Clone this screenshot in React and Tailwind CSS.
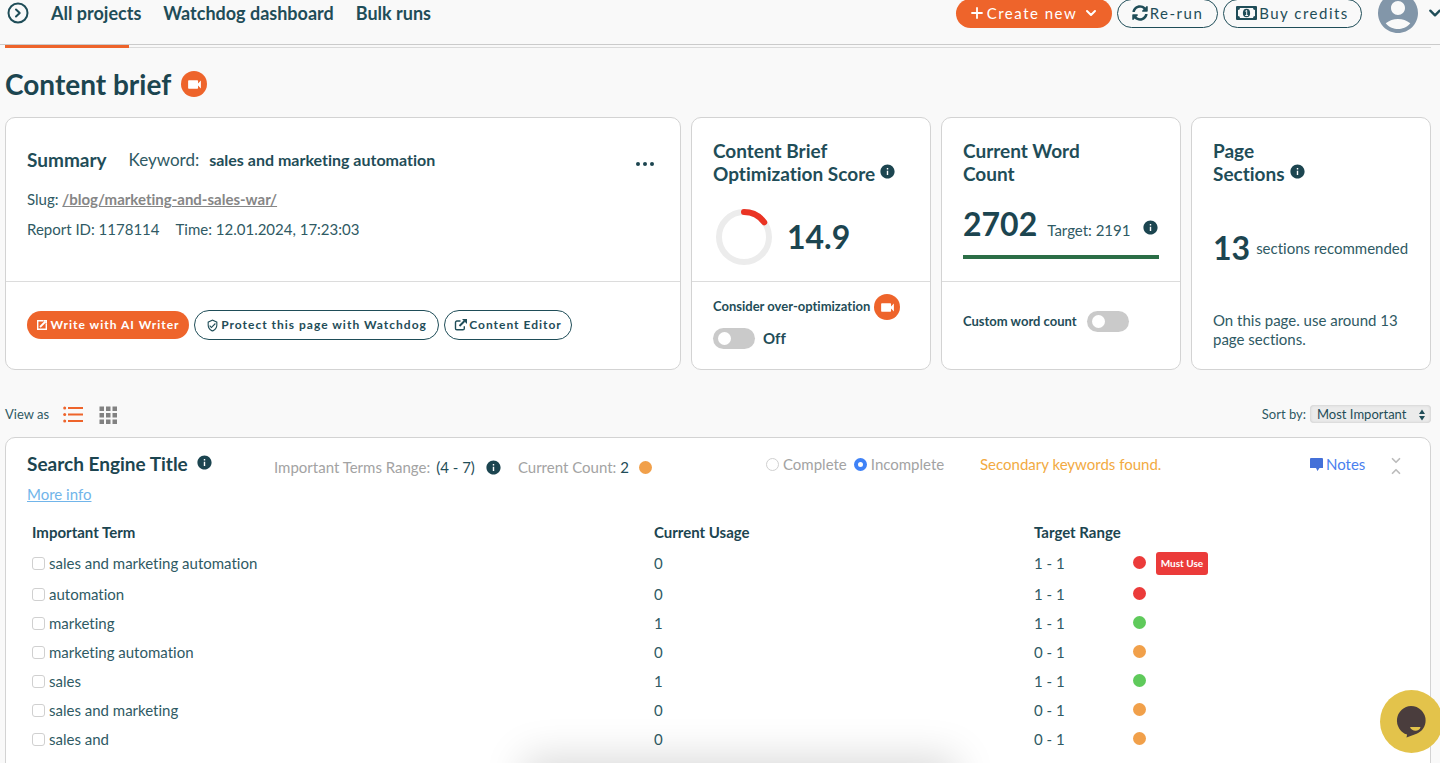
import { useState } from "react";
import { MdInfo, MdVideocam, MdAccountCircle, MdOutlineVerifiedUser } from "react-icons/md";
import { FaSyncAlt } from "react-icons/fa";

const terms = [
  { name: "sales and marketing automation", usage: 0, range: "1 - 1", dot: "bg-[#eb3b3a]", must: true },
  { name: "automation", usage: 0, range: "1 - 1", dot: "bg-[#eb3b3a]" },
  { name: "marketing", usage: 1, range: "1 - 1", dot: "bg-[#5fca5b]" },
  { name: "marketing automation", usage: 0, range: "0 - 1", dot: "bg-[#f1a04a]" },
  { name: "sales", usage: 1, range: "1 - 1", dot: "bg-[#5fca5b]" },
  { name: "sales and marketing", usage: 0, range: "0 - 1", dot: "bg-[#f1a04a]" },
  { name: "sales and", usage: 0, range: "0 - 1", dot: "bg-[#f1a04a]" },
];

function Info({ className = "" }) {
  return <MdInfo className={"size-[17px] shrink-0 text-[#1c4550] " + className} />;
}

function VideoButton() {
  return (
    <button aria-label="Watch video" className="flex size-[26px] shrink-0 items-center justify-center rounded-full bg-[#ee642b] text-white">
      <MdVideocam className="size-[17px]" />
    </button>
  );
}

function Chevron({ className }) {
  return (
    <svg viewBox="0 0 12 8" className={className} fill="none" stroke="currentColor" strokeWidth="2" strokeLinecap="round" strokeLinejoin="round">
      <path d="M2 2l4 4 4-4" />
    </svg>
  );
}

function MoneyIcon() {
  return (
    <svg viewBox="0 0 21 14" className="h-3.5 w-[21px]">
      <rect width="21" height="14" rx="1" fill="currentColor" />
      <path d="M4 2h13a2 2 0 0 0 2 2v6a2 2 0 0 0-2 2H4a2 2 0 0 0-2-2V4a2 2 0 0 0 2-2z" fill="#f9f9f9" />
      <ellipse cx="10.500" cy="7" rx="3.600" ry="4.300" fill="currentColor" />
      <path d="M9.300 5.300l1.400-.9v5M9.200 9.500h2.900" fill="none" stroke="#f9f9f9" strokeWidth="1" />
    </svg>
  );
}

function WriteIcon() {
  return (
    <svg viewBox="0 0 12 12" className="size-3" fill="none" stroke="currentColor" strokeWidth="1.400">
      <path d="M7 1.700H1.700v8.600h8.600V5" />
      <path d="M4 8l5.500-5.500" strokeWidth="1.800" />
      <path d="M7.300 1.700h3v3" />
    </svg>
  );
}

function EditIcon() {
  return (
    <svg viewBox="0 0 13 12" className="h-3 w-[13px]" fill="none" stroke="currentColor" strokeWidth="1.400">
      <path d="M6.500 2H2.900a1.400 1.400 0 0 0-1.400 1.400v6a1.400 1.400 0 0 0 1.400 1.400h6a1.400 1.400 0 0 0 1.400-1.400V7.300" />
      <path d="M5.500 7l5-5" strokeWidth="2" />
      <path d="M8 0h5v5z" fill="currentColor" stroke="none" />
    </svg>
  );
}

function Toggle({ label }) {
  return (
    <span className="relative inline-flex h-[21px] w-[42px] shrink-0">
      <input type="checkbox" role="switch" aria-label={label} className="peer size-full appearance-none rounded-full bg-[#cacaca]" />
      <span className="pointer-events-none absolute top-1 left-[5px] size-[13px] rounded-full bg-white peer-checked:left-6" />
    </span>
  );
}

function Card({ top, bottom }) {
  return (
    <section className="flex h-[253px] flex-col rounded-[10px] border border-[#d3d3d3] bg-white">
      <div className="h-[164px] border-b border-[#dcdcdc] px-[21px]">{top}</div>
      <div className="flex-1 px-[21px]">{bottom}</div>
    </section>
  );
}

const outline = "flex items-center justify-center rounded-full border border-[#1f4d58] text-[#1f4d58]";

export default function App() {
  const [status, setStatus] = useState("incomplete");
  return (
    <div className="h-screen overflow-hidden bg-[#f9f9f9] font-['Lato',sans-serif] text-[#2f5a64] [font-variant-ligatures:none]">
      <header className="h-[45px] border-b border-[#cbcbcb]">
        <div className="flex h-[26px] items-center pl-[7px] text-[#1f4d58]">
          <button aria-label="Expand menu">
            <svg viewBox="0 0 22 22" className="size-[22px]" fill="none" stroke="currentColor" strokeWidth="2">
              <circle cx="11" cy="11" r="9.500" />
              <path d="M9 7.500l3.700 3.500L9 14.500" strokeLinecap="round" strokeLinejoin="round" />
            </svg>
          </button>
          <nav className="ml-[22px] flex gap-[22px] text-lg leading-6 font-bold whitespace-nowrap">
            <a href="#projects">All projects</a>
            <a href="#watchdog">Watchdog dashboard</a>
            <a href="#bulk">Bulk runs</a>
          </nav>
          <div className="ml-auto flex items-center gap-[5px] text-[15px] tracking-[1.5px] whitespace-nowrap">
            <button className="flex h-[29px] w-[156px] items-center justify-center gap-1 rounded-full bg-[#ee642b] text-white">
              <svg viewBox="0 0 12 12" className="size-3" stroke="currentColor" strokeWidth="1.800" strokeLinecap="round">
                <path d="M6 1v10M1 6h10" />
              </svg>
              Create new
              <Chevron className="ml-1 h-2 w-3" />
            </button>
            <button className={outline + " h-[29px] w-[101px]"}>
              <FaSyncAlt className="mr-0.5 size-4" />
              Re-run
            </button>
            <button className={outline + " h-[29px] w-[139px] gap-0.5"}>
              <MoneyIcon />
              Buy credits
            </button>
          </div>
          <button aria-label="Account" className="-mr-0.5 ml-3 flex items-center gap-1.5">
            <MdAccountCircle className="-my-3 size-12 text-[#8296a9]" />
            <Chevron className="h-2.5 w-3.5" />
          </button>
        </div>
      </header>

      <main className="pr-[9px] pl-[5px]">
        <div className="h-[3px] border-b border-[#dadada]">
          <div className="h-[3px] w-[124px] bg-[#ee642b]" />
        </div>
        <div className="mt-4 flex h-10 items-center gap-2.5">
          <h1 className="text-[28px] leading-10 font-bold text-[#1c4550]">Content brief</h1>
          <VideoButton />
        </div>

        <div className="mt-[13px] grid grid-cols-[676fr_240fr_240fr_240fr] gap-2.5">
          <Card
            top={
              <div className="pt-[30px]">
                <div className="flex h-6 items-center whitespace-nowrap">
                  <h2 className="text-[19px] font-bold text-[#1f4d58]">Summary</h2>
                  <span className="ml-[22px] text-[17px]">Keyword:</span>
                  <strong className="ml-2.5 text-base text-[#1f4d58]">sales and marketing automation</strong>
                  <button aria-label="More options" className="mt-2 ml-auto flex gap-[3px] pr-[5px]">
                    <i className="size-1 rounded-full bg-[#1c4550]" />
                    <i className="size-1 rounded-full bg-[#1c4550]" />
                    <i className="size-1 rounded-full bg-[#1c4550]" />
                  </button>
                </div>
                <p className="mt-4 text-[15px] leading-[22px]">
                  Slug:{" "}
                  <a href="#slug" className="font-bold text-[#868686] underline">/blog/marketing-and-sales-war/</a>
                </p>
                <p className="mt-2 flex gap-4 text-[15px] leading-[22px]">
                  <span>Report ID: 1178114</span>
                  <span>Time: 12.01.2024, 17:23:03</span>
                </p>
              </div>
            }
            bottom={
              <div className="flex items-center gap-[5px] pt-7 text-xs font-bold tracking-[1px] whitespace-nowrap">
                <button className="flex h-7 w-[162px] items-center justify-center gap-0.5 rounded-full bg-[#ee642b] text-white">
                  <WriteIcon />
                  Write with AI Writer
                </button>
                <button className={outline + " h-[30px] w-[245px] gap-0.5"}>
                  <MdOutlineVerifiedUser className="size-[13px]" />
                  Protect this page with Watchdog
                </button>
                <button className={outline + " h-[30px] w-[128px] gap-0.5"}>
                  <EditIcon />
                  Content Editor
                </button>
              </div>
            }
          />
          <Card
            top={
              <div className="pt-[21px]">
                <h2 className="text-[19px] leading-[23px] font-bold whitespace-nowrap text-[#1f4d58]">
                  Content Brief
                  <br />
                  <span className="flex items-center gap-1">Optimization Score <Info className="mb-1" /></span>
                </h2>
                <div className="mt-[23px] flex items-center gap-[14px] pl-0.5">
                  <svg viewBox="0 0 58 58" className="size-[58px]" fill="none" strokeWidth="6">
                    <circle cx="29" cy="29" r="25" stroke="#ececec" />
                    <path d="M29 4A25 25 0 0 1 49.200 14.300" stroke="#ea3323" strokeLinecap="round" />
                  </svg>
                  <strong className="text-[32px] text-[#1c4550]">14.9</strong>
                </div>
              </div>
            }
            bottom={
              <div className="pt-3">
                <div className="flex items-center gap-1 text-[13px] font-bold whitespace-nowrap text-[#1f4d58]">
                  Consider over-optimization <VideoButton />
                </div>
                <label className="mt-[7px] flex items-center gap-2 text-[15px] font-bold text-[#1f4d58]">
                  <Toggle label="Consider over-optimization" /> Off
                </label>
              </div>
            }
          />
          <Card
            top={
              <div className="pt-[21px]">
                <h2 className="text-[19px] leading-[23px] font-bold text-[#1f4d58]">
                  Current Word
                  <br />
                  Count
                </h2>
                <div className="mt-[19px] flex h-10 items-center whitespace-nowrap">
                  <strong className="text-[32px] text-[#1c4550]">2702</strong>
                  <span className="mt-3 ml-2.5 text-[15px]">Target: 2191</span>
                  <span className="mt-1.5 ml-auto"><Info /></span>
                </div>
                <div className="mt-[11px] h-1 bg-[#2b6e46]" />
              </div>
            }
            bottom={
              <label className="flex items-center gap-2.5 pt-[29px] text-[13px] font-bold text-[#1f4d58]">
                Custom word count <Toggle label="Custom word count" />
              </label>
            }
          />
          <section className="rounded-[10px] border border-[#d3d3d3] bg-white px-[21px] pt-[21px]">
            <h2 className="text-[19px] leading-[23px] font-bold text-[#1f4d58]">
              Page
              <br />
              <span className="flex items-center gap-1">Sections <Info className="mb-1" /></span>
            </h2>
            <div className="mt-[43px] flex h-10 items-center gap-1.5 whitespace-nowrap">
              <strong className="text-[32px] text-[#1c4550]">13</strong>
              <span className="text-[15px]">sections recommended</span>
            </div>
            <p className="mt-[43px] text-[15px] leading-[19px]">On this page. use around 13 page sections.</p>
          </section>
        </div>

        <div className="flex h-[67px] items-center pt-[22px] text-[13px]">
          <span>View as</span>
          <button aria-label="List view" className="ml-3.5">
            <svg viewBox="0 0 20 17" className="h-[17px] w-5" fill="#ee642b">
              <circle cx="1.700" cy="2" r="1.500" />
              <circle cx="1.700" cy="8.500" r="1.500" />
              <circle cx="1.700" cy="15" r="1.500" />
              <path d="M5 1h15v2H5zM5 7.500h15v2H5zM5 14h15v2H5z" />
            </svg>
          </button>
          <button aria-label="Grid view" className="ml-4">
            <svg viewBox="0 0 18 18" className="size-[18px]" fill="#828282">
              <path d="M0.500 0.500h4.500v4.500h-4.500zM7 0.500h4.500v4.500H7zM13.500 0.500h4.500v4.500h-4.500zM0.500 7h4.500v4.500h-4.500zM7 7h4.500v4.500H7zM13.500 7h4.500v4.500h-4.500zM0.500 13.500h4.500v4.500h-4.500zM7 13.500h4.500v4.500H7zM13.500 13.500h4.500v4.500h-4.500z" />
            </svg>
          </button>
          <label htmlFor="sort" className="ml-auto">Sort by:</label>
          <span className="relative ml-1">
            <select id="sort" className="h-[18px] w-[121px] appearance-none rounded-sm bg-[#ebebeb] pl-[7px] text-[13px] text-[#1f4d58] shadow-[inset_0_0_3px_#c4c4c4]">
              <option>Most Important</option>
            </select>
            <svg viewBox="0 0 6 12" className="pointer-events-none absolute top-1 right-1.5 h-3 w-1.5" fill="#1f4d58">
              <path d="M0 5l3-4.500L6 5zM0 7l3 4.500L6 7z" />
            </svg>
          </span>
        </div>

        <section className="h-[400px] rounded-[10px] border border-[#d3d3d3] bg-white px-[21px] pt-[15px]">
          <div className="grid grid-cols-[247fr_492fr_214fr_330fr_99fr] items-start text-[15px] leading-[22px] whitespace-nowrap">
            <div>
              <h2 className="flex items-center gap-2 text-[19px] leading-[22px] font-bold text-[#1c4550]">
                Search Engine Title <Info className="mb-1" />
              </h2>
              <a href="#more" className="mt-2 inline-block text-[#71b5ea] underline">More info</a>
            </div>
            <div className="flex items-center pt-[3px] text-[#a3a3a3]">
              Important Terms Range:<span className="mr-2.5 ml-1.5 text-[#1f4d58]">(4 - 7)</span>
              <Info />
              <span className="ml-4">Current Count:</span>
              <span className="ml-1 text-[#1f4d58]">2</span>
              <i className="ml-2.5 size-[13px] rounded-full bg-[#f1a04a]" />
            </div>
            <div className="flex items-center text-[#a3a3a3]">
              <label className="flex items-center gap-1">
                <input type="radio" name="status" checked={status === "complete"} onChange={() => setStatus("complete")} className="size-[13px] appearance-none rounded-full border border-[#d0d0d0] bg-white checked:border-4 checked:border-[#3f82f7]" />
                Complete
              </label>
              <label className="ml-[7px] flex items-center gap-1">
                <input type="radio" name="status" checked={status === "incomplete"} onChange={() => setStatus("incomplete")} className="size-[13px] appearance-none rounded-full border border-[#d0d0d0] bg-white checked:border-4 checked:border-[#3f82f7]" />
                Incomplete
              </label>
            </div>
            <span className="text-[#f2aa42]">Secondary keywords found.</span>
            <div className="flex items-start justify-between pr-[7px]">
              <button className="flex items-center gap-[3px] text-[#4a80ee]">
                <svg viewBox="0 0 13 13" className="size-[13px]" fill="#4470d8">
                  <path d="M1 0h11a1 1 0 0 1 1 1v9H9.500L7.500 13 6 10H0V1a1 1 0 0 1 1-1z" />
                </svg>
                Notes
              </button>
              <button aria-label="Collapse" className="mt-1 flex flex-col gap-1 text-[#bcbcbc]">
                <Chevron className="h-[7px] w-3" />
                <Chevron className="h-[7px] w-3 rotate-180" />
              </button>
            </div>
          </div>

          <table className="mt-[13px] w-full table-fixed text-left text-[15px]">
            <thead>
              <tr className="h-[29px] text-[#1c4550]">
                <th className="w-[45%] pl-[5px]">Important Term</th>
                <th className="w-[27.5%] pl-[5px]">Current Usage</th>
                <th className="pl-[5px]">Target Range</th>
              </tr>
            </thead>
            <tbody>
              {terms.map((t) => (
                <tr key={t.name} className="h-[29px] first:h-[33px]">
                  <td className="pl-[5px]">
                    <label className="flex items-center gap-1">
                      <input type="checkbox" className="size-[13px] appearance-none rounded-[3px] border border-[#d0d0d0] bg-white checked:bg-[#3f82f7]" />
                      {t.name}
                    </label>
                  </td>
                  <td className="pl-[5px]">{t.usage}</td>
                  <td className="pl-[5px]">
                    <div className="flex items-center">
                      <span className="w-[99px]">{t.range}</span>
                      <i className={"mb-[3px] size-[13px] rounded-full " + t.dot} />
                      {t.must && (
                        <span className="ml-2.5 flex h-[23px] w-[52px] items-center justify-center rounded-[3px] bg-[#eb3b3a] text-[10px] font-bold text-white">
                          Must Use
                        </span>
                      )}
                    </div>
                  </td>
                </tr>
              ))}
            </tbody>
          </table>
        </section>
      </main>

      <div className="pointer-events-none fixed inset-x-0 bottom-[-30px] flex justify-center pl-10">
        <div className="h-5 w-[400px] shadow-[0_0_40px_16px_rgba(0,0,0,0.15)]" />
      </div>
      <button aria-label="Open chat" className="fixed right-[-3px] bottom-2.5 size-[63px] rounded-full bg-[#e3c34b]">
        <svg viewBox="0 0 63 63" className="size-[63px]">
          <path d="M31 16a14.600 14.600 0 0 1 14.600 14.600c0 6-3.500 11-9 13.200L26.500 47.500l.6-3A14.600 14.600 0 0 1 31 16z" fill="#4a3d3d" />
          <path d="M30 37h10.500c-.8 5-9 5-10.500 0z" fill="#e3c34b" />
        </svg>
      </button>
    </div>
  );
}
